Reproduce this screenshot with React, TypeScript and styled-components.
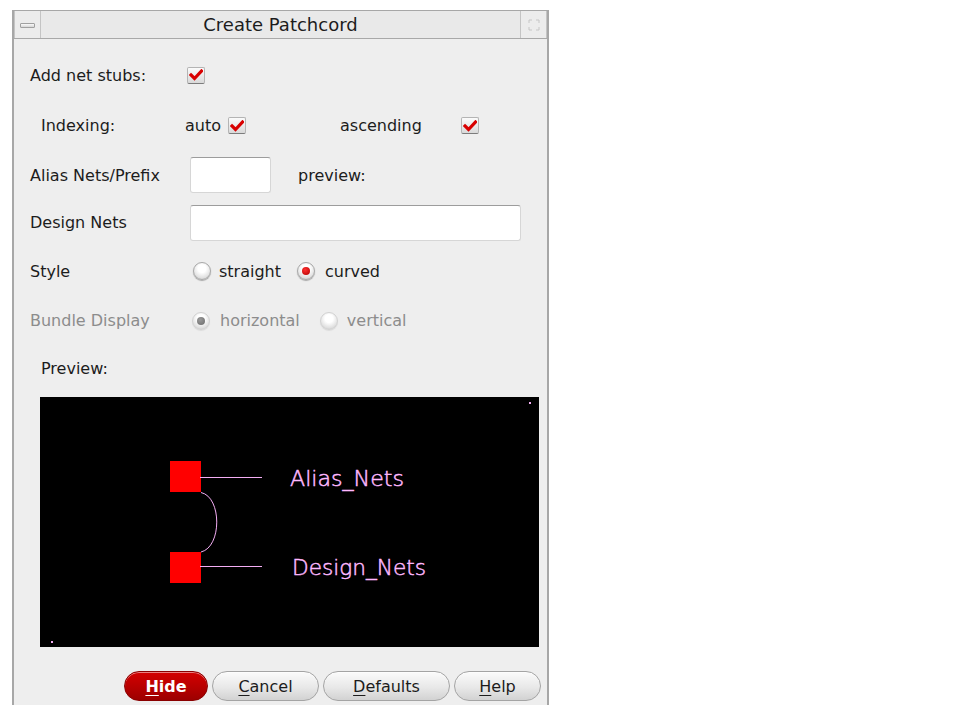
import React from "react";
import styled, { createGlobalStyle } from "styled-components";

const Global = createGlobalStyle`
  html, body { margin: 0; padding: 0; background: #ffffff; }
  body { font-family: "DejaVu Sans", "Liberation Sans", sans-serif; }
  #root { height: 705px; }
`;

const Page = styled.div`
  height: 705px;
  padding: 10px 0 0 12px;
  box-sizing: border-box;
  overflow: hidden;
`;

const Window = styled.div`
  width: 537px;
  height: 700px;
  box-sizing: border-box;
  border: 2px solid #a7a7a7;
  border-top-width: 1px;
  border-bottom: none;
  background: #eeeeee;
  display: flex;
  flex-direction: column;
`;

const TitleBar = styled.div`
  height: 28px;
  display: flex;
  align-items: stretch;
  background: #e9e9e9;
  border-bottom: 1px solid #a8a8a8;
  box-sizing: border-box;
`;

const TitleButton = styled.div`
  width: 27px;
  box-sizing: border-box;
  display: flex;
  align-items: center;
  justify-content: center;
  background: #ececec;
  border: 1px solid #c4c4c4;
  border-bottom: none;
  border-top: none;
`;

const MinBar = styled.div`
  width: 13px;
  height: 3px;
  border: 1px solid #a0a0a0;
  border-radius: 1px;
  background: linear-gradient(#fafafa, #d6d6d6);
  margin-top: 2px;
`;

const Title = styled.div`
  flex: 1;
  text-align: center;
  font-size: 18px;
  line-height: 27px;
  color: #1c1c1c;
`;

const Body = styled.div`
  flex: 1;
  padding-top: 11px;
  display: flex;
  flex-direction: column;
  color: #1c1c1c;
  font-size: 16px;
`;

const Row = styled.div<{ $h: number; $pl?: number }>`
  height: ${(p) => p.$h}px;
  display: flex;
  align-items: center;
  padding-left: ${(p) => p.$pl ?? 16}px;
  box-sizing: border-box;
`;

const Label = styled.span<{ $w?: number; $ml?: number; $disabled?: boolean }>`
  display: inline-block;
  ${(p) => (p.$w ? `width: ${p.$w}px;` : "")}
  margin-left: ${(p) => p.$ml ?? 0}px;
  color: ${(p) => (p.$disabled ? "#8c8c8c" : "#1c1c1c")};
  white-space: nowrap;
  flex-shrink: 0;
`;

const CheckBox = styled.span<{ $ml?: number }>`
  width: 18px;
  height: 17px;
  margin-left: ${(p) => p.$ml ?? 0}px;
  box-sizing: border-box;
  border: 1px solid #b4b4b4;
  border-bottom-color: #7c7c7c;
  border-radius: 2px;
  background: linear-gradient(#fbfbfb, #d9d9d9);
  display: inline-flex;
  align-items: center;
  justify-content: center;
  flex-shrink: 0;
`;

const Input = styled.div<{ $w: number }>`
  width: ${(p) => p.$w}px;
  height: 36px;
  box-sizing: border-box;
  background: #ffffff;
  border: 1px solid #d6d6d6;
  border-top-color: #9c9c9c;
  border-radius: 3px;
  flex-shrink: 0;
`;

const Option = styled.span<{ $ml?: number; $gap?: number; $disabled?: boolean }>`
  display: inline-flex;
  align-items: center;
  gap: ${(p) => p.$gap ?? 9}px;
  margin-left: ${(p) => p.$ml ?? 0}px;
  color: ${(p) => (p.$disabled ? "#8c8c8c" : "#1c1c1c")};
  white-space: nowrap;
`;

const Radio = styled.span<{ $on?: boolean; $disabled?: boolean }>`
  width: 18px;
  height: 18px;
  border-radius: 50%;
  box-sizing: border-box;
  border: 1px solid ${(p) => (p.$disabled ? "#d2d2d2" : "#a8a8a8")};
  background: radial-gradient(circle at 50% 35%, #ffffff 30%, #e0e0e0 70%, #bdbdbd 100%);
  box-shadow: 0 1px 1px ${(p) => (p.$disabled ? "rgba(0,0,0,0.08)" : "rgba(0,0,0,0.3)")};
  display: inline-flex;
  align-items: center;
  justify-content: center;
  flex-shrink: 0;
  &::after {
    content: "";
    display: ${(p) => (p.$on ? "block" : "none")};
    width: 8px;
    height: 8px;
    border-radius: 50%;
    background: ${(p) =>
      p.$disabled
        ? "radial-gradient(circle at 40% 35%, #9a9a9a, #6a6a6a)"
        : "radial-gradient(circle at 40% 35%, #ff3030, #b00000)"};
  }
`;

const Canvas = styled.div`
  margin: 6px 0 0 26px;
  width: 499px;
  height: 250px;
  background: #000000;
  position: relative;
`;

const ButtonBar = styled.div`
  margin-top: 24px;
  display: flex;
  justify-content: flex-end;
  gap: 4px;
  padding-right: 6px;
`;

const Button = styled.button<{ $w: number; $primary?: boolean }>`
  width: ${(p) => p.$w}px;
  height: 30px;
  border-radius: 15px;
  box-sizing: border-box;
  font-family: "DejaVu Sans", "Liberation Sans", sans-serif;
  font-size: 16px;
  padding: 0;
  color: ${(p) => (p.$primary ? "#ffffff" : "#1c1c1c")};
  font-weight: ${(p) => (p.$primary ? "bold" : "normal")};
  border: 1px solid ${(p) => (p.$primary ? "#8a0000" : "#a4a4a4")};
  background: ${(p) =>
    p.$primary
      ? "linear-gradient(#d40000, #b40000 60%, #9c0000)"
      : "linear-gradient(#fbfbfb, #e8e8e8 55%, #d2d2d2)"};
  box-shadow: inset 0 1px 0 rgba(255,255,255,0.5);
  u { text-underline-offset: 3px; }
`;

const Check = () => (
  <svg width="14" height="12" viewBox="0 0 14 12">
    <path d="M2 6 L5.5 9.5 L12.5 2" stroke="#d80000" strokeWidth="3.2" fill="none" strokeLinecap="square" />
  </svg>
);

const MaxIcon = () => (
  <svg width="14" height="14" viewBox="0 0 14 14">
    <path d="M2 5 V2 H5 M9 2 H12 V5 M12 9 V12 H9 M5 12 H2 V9" stroke="#c6c6c6" strokeWidth="1" fill="none" />
  </svg>
);

const PINK = "#f4aef4";
const TEXT_PINK = "#ffb8ff";

const Drawing = () => (
  <svg width="499" height="250" viewBox="0 0 499 250" style={{ display: "block" }}>
    <rect x="489" y="5" width="2" height="2" fill={PINK} />
    <rect x="11" y="244" width="2" height="2" fill={PINK} />
    <rect x="130" y="64" width="31" height="31" fill="#ff0000" />
    <rect x="130" y="155" width="31" height="31" fill="#ff0000" />
    <line x1="160" y1="80.5" x2="222" y2="80.5" stroke={PINK} strokeWidth="1" />
    <line x1="160" y1="169.5" x2="222" y2="169.5" stroke={PINK} strokeWidth="1" />
    <path d="M161 95.5 C 182 100, 182 150, 161 155" stroke={PINK} strokeWidth="1" fill="none" />
    <text x="250" y="89" fill={TEXT_PINK} stroke={TEXT_PINK} strokeWidth="0.5" fontFamily="'DejaVu Sans', sans-serif" fontWeight="200" fontSize="22" textLength="114" lengthAdjust="spacingAndGlyphs">
      Alias_Nets
    </text>
    <text x="252" y="178" fill={TEXT_PINK} stroke={TEXT_PINK} strokeWidth="0.5" fontFamily="'DejaVu Sans', sans-serif" fontWeight="200" fontSize="22" textLength="134" lengthAdjust="spacingAndGlyphs">
      Design_Nets
    </text>
  </svg>
);

export default function App() {
  return (
    <>
      <Global />
      <Page>
        <Window>
          <TitleBar>
            <TitleButton>
              <MinBar />
            </TitleButton>
            <Title>Create Patchcord</Title>
            <TitleButton>
              <MaxIcon />
            </TitleButton>
          </TitleBar>
          <Body>
            <Row $h={50}>
              <Label $w={157}>Add net stubs:</Label>
              <CheckBox>
                <Check />
              </CheckBox>
            </Row>
            <Row $h={51} $pl={27}>
              <Label $w={144}>Indexing:</Label>
              <Label>auto</Label>
              <CheckBox $ml={7}>
                <Check />
              </CheckBox>
              <Label $ml={94}>ascending</Label>
              <CheckBox $ml={39}>
                <Check />
              </CheckBox>
            </Row>
            <Row $h={48}>
              <Label $w={160}>Alias Nets/Prefix</Label>
              <Input $w={81} />
              <Label $ml={27}>preview:</Label>
            </Row>
            <Row $h={47}>
              <Label $w={160}>Design Nets</Label>
              <Input $w={331} />
            </Row>
            <Row $h={50}>
              <Label $w={163}>Style</Label>
              <Option $gap={8}>
                <Radio />
                straight
              </Option>
              <Option $ml={16} $gap={10}>
                <Radio $on />
                curved
              </Option>
            </Row>
            <Row $h={49}>
              <Label $w={162} $disabled>Bundle Display</Label>
              <Option $gap={10} $disabled>
                <Radio $on $disabled />
                horizontal
              </Option>
              <Option $ml={20} $gap={9} $disabled>
                <Radio $disabled />
                vertical
              </Option>
            </Row>
            <Row $h={46} $pl={27}>
              <Label>Preview:</Label>
            </Row>
            <Canvas>
              <Drawing />
            </Canvas>
            <ButtonBar>
              <Button $w={84} $primary>
                <u>H</u>ide
              </Button>
              <Button $w={107}>
                <u>C</u>ancel
              </Button>
              <Button $w={127}>
                <u>D</u>efaults
              </Button>
              <Button $w={87}>
                <u>H</u>elp
              </Button>
            </ButtonBar>
          </Body>
        </Window>
      </Page>
    </>
  );
}
